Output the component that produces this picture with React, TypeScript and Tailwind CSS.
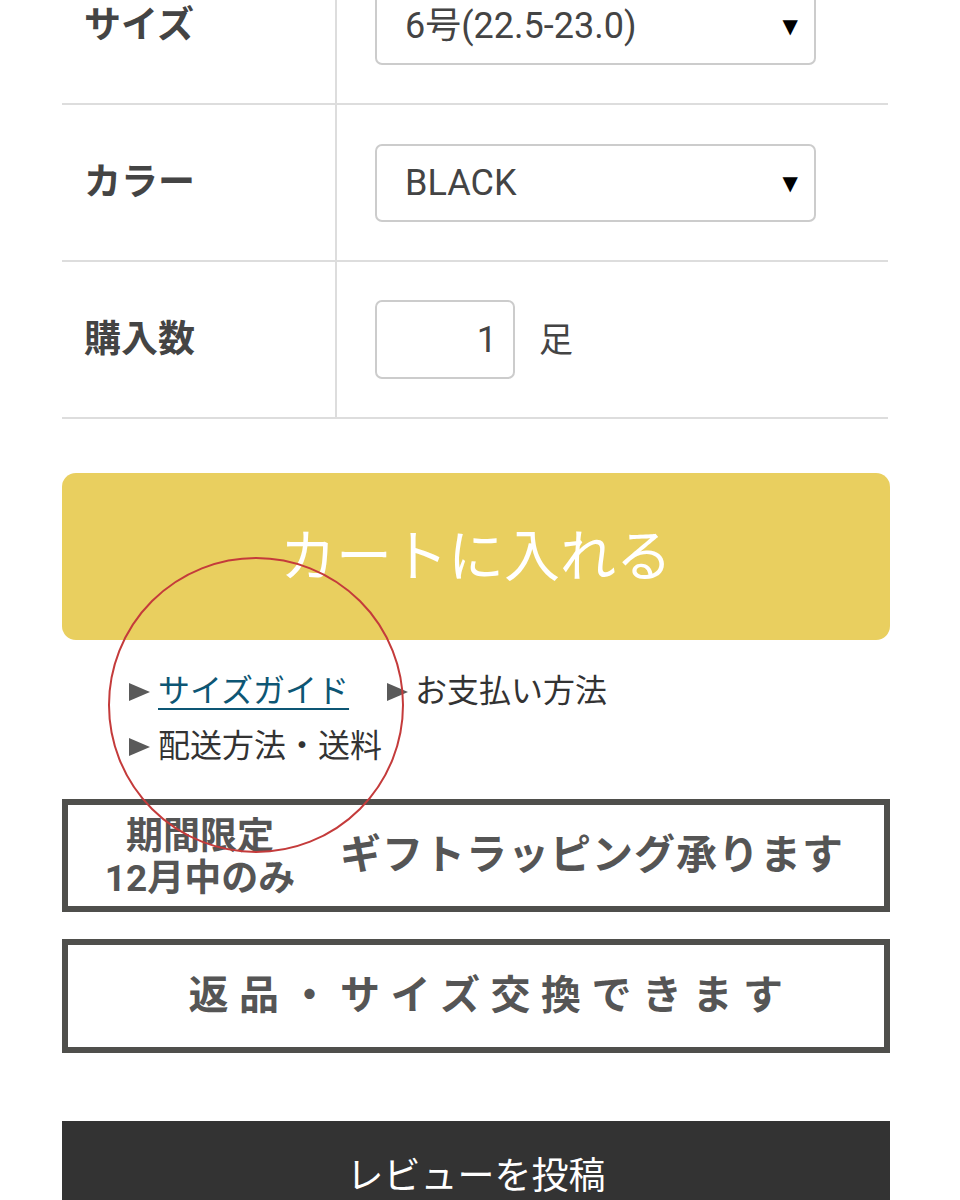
import React from "react";

const Tri = () => (
  <svg width="21" height="18" viewBox="0 0 21 18" className="shrink-0">
    <polygon points="0,0 21,9 0,18" fill="#5a5a5a" />
  </svg>
);

function Row({ label, children }: { label: string; children: React.ReactNode }) {
  return (
    <div className="flex h-[157px] border-b-2 border-[#dddddd]">
      <div className="w-[275px] shrink-0 border-r-2 border-[#dddddd] flex items-center pl-[22px] text-[37px] font-bold text-[#444444]">
        {label}
      </div>
      <div className="flex-1 flex items-center pl-[38px]">{children}</div>
    </div>
  );
}

function Select({ value }: { value: string }) {
  return (
    <div className="w-[441px] h-[78px] border-2 border-[#cccccc] rounded-[7px] flex items-center justify-between pl-[28px] pr-[16px] bg-white">
      <span className="text-[36px] text-[#444444] leading-none">{value}</span>
      <span className="text-[20px] text-black leading-none" style={{ fontFamily: "'DejaVu Sans', sans-serif" }}>▼</span>
    </div>
  );
}

export default function App() {
  return (
    <div
      className="relative w-[960px] h-[1200px] bg-white overflow-hidden"
      style={{ fontFamily: "Roboto, 'Noto Sans CJK JP', sans-serif" }}
    >
      <div className="ml-[62px] w-[828px]">
        <div className="-mt-[52px] w-[826px]">
          <Row label="サイズ">
            <Select value="6号(22.5-23.0)" />
          </Row>
          <Row label="カラー">
            <Select value="BLACK" />
          </Row>
          <Row label="購入数">
            <div className="flex items-center gap-[24px]">
              <div className="w-[140px] h-[79px] border-2 border-[#cccccc] rounded-[7px] flex items-center justify-end pr-[16px]">
                <span className="text-[36px] text-[#444444] leading-none">1</span>
              </div>
              <span className="text-[34px] text-[#444444] leading-none">足</span>
            </div>
          </Row>
        </div>

        <button className="mt-[54px] w-[828px] h-[167px] rounded-[14px] bg-[#e9cf5f] flex items-center justify-center">
          <span className="text-[56px] font-normal text-white leading-none">カートに入れる</span>
        </button>

        <div className="mt-[24px] pl-[67px] text-[32px] text-[#333333] leading-[55px]">
          <div className="flex items-center">
            <Tri />
            <a className="ml-[8px] text-[#0d5674] underline underline-offset-[6px] decoration-2">サイズガイド</a>
            <span className="ml-[38px]"><Tri /></span>
            <span className="ml-[7px]">お支払い方法</span>
          </div>
          <div className="flex items-center">
            <Tri />
            <span className="ml-[8px]">配送方法・送料</span>
          </div>
        </div>

        <div className="mt-[25px] h-[113px] border-[6px] border-[#4f4f4c] flex items-center text-[#555555] font-bold">
          <div className="w-[264px] shrink-0 flex flex-col items-center text-[37px] leading-[42px] pt-[4px]">
            <span>期間限定</span>
            <span>12月中のみ</span>
          </div>
          <div className="ml-[8px] text-[41px] leading-none tracking-[1px]">ギフトラッピング承ります</div>
        </div>

        <div className="mt-[27px] h-[114px] border-[6px] border-[#4f4f4c] flex items-center justify-center text-[#555555] font-bold">
          <span className="text-[40px] leading-none tracking-[10.5px] pl-[30px]">返品・サイズ交換できます</span>
        </div>

        <div className="mt-[68px] h-[110px] bg-[#333333] flex items-center justify-center">
          <span className="text-[37px] text-white leading-none">レビューを投稿</span>
        </div>
      </div>

      <svg
        className="absolute left-[106px] top-[556px] pointer-events-none"
        width="300"
        height="300"
        viewBox="0 0 300 300"
      >
        <ellipse cx="150" cy="149" rx="147" ry="147" fill="none" stroke="#c43b3b" strokeWidth="2" />
      </svg>
    </div>
  );
}
